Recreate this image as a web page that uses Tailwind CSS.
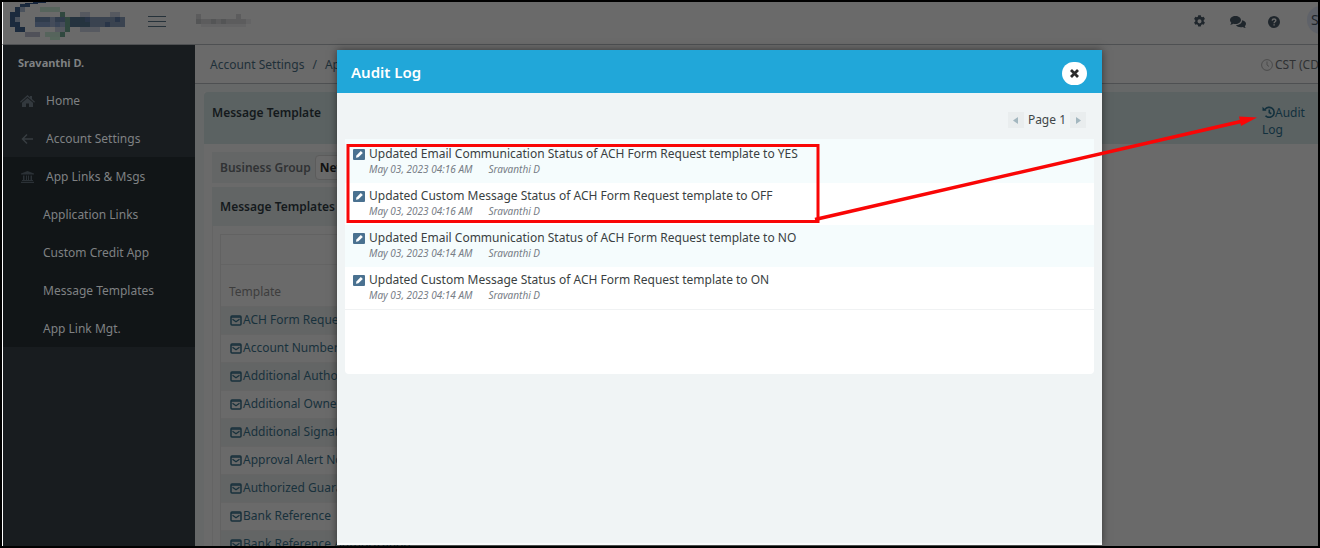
<!DOCTYPE html>
<html lang="en">
<head>
  <meta charset="UTF-8">
  <meta name="viewport" content="width=device-width, initial-scale=1.0">
  <title>Audit Log | Message Templates</title>
  <script src="https://cdn.jsdelivr.net/npm/@tailwindcss/browser@4"></script>
</head>
<body class="font-['Noto_Sans',sans-serif] text-[12px] leading-5">
  <!-- Shared icons -->
  <svg class="hidden">
    <symbol id="mail" viewBox="0 0 12 11">
      <rect x="1" y="1" width="10" height="9" rx="1" fill="none" stroke="currentColor" stroke-width="1.5"/>
      <path d="M1 2.2h10M2.5 4.2 6 6.8l3.500-2.600" fill="none" stroke="currentColor" stroke-width="1.300"/>
    </symbol>
    <symbol id="pencil" viewBox="0 0 12 11">
      <rect width="12" height="11" rx="1" fill="#4a7190"/>
      <path d="M3 8.800l.4-2.400L7.800 2l2 1.900L5.400 8.300z" fill="#fff"/>
    </symbol>
  </svg>

  <div class="relative h-screen overflow-hidden border-2 border-black bg-[#6a6a6a] flex flex-col">
    <header class="h-[43px] shrink-0 flex items-center border-b border-l border-b-[#4e5052] border-l-white pl-[7px] pb-[3px]">
      <svg class="w-[118px] h-10 shrink-0" viewBox="0 0 118 40" role="img" aria-label="Company logo" shape-rendering="crispEdges">
        <path d="M15 1h8V0h13v1h-8v1h-8v1h-5z" fill="#14233a"/>
        <g fill="#1b2a3d">
          <path d="M10 2h10v3H10zM5 5h5v5H5zM0 10h10v5H0zM0 15h5v5H0zM0 20h10v5H0zM5 25h10v5H5z"/>
        </g>
        <path d="M10 5h5v5h-5zM5 15h5v5H5z" fill="#4b525c"/>
        <path d="M15 30h15v5H15z" fill="#505159"/>
        <path d="M25 15h35v5H25z" fill="#303c4c"/>
        <path d="M25 20h35v5H25z" fill="#3a4557"/>
        <path d="M40 15h5v10h-5zM50 20h5v5h-5z" fill="#444c5a"/>
        <path d="M60 15h20v10H60z" fill="#25333f"/>
        <path d="M80 15h35v10H80z" fill="#3a4350"/>
        <path d="M75 15h5v5h-5zM95 20h5v5h-5zM105 15h5v5h-5z" fill="#293548"/>
        <path d="M70 10h10v5H70zM100 10h10v5h-10zM45 25h15v5H45zM70 25h20v5H70z" fill="#565960"/>
        <path d="M30 5h20v5H30zM35 30h20v5H35z" fill="#56645c"/>
        <path d="M50 10h5v5h-5zM55 15h5v15h-5zM50 30h5v5h-5z" fill="#30483f"/>
        <path d="M40 35h10v3H40z" fill="#56675c"/>
      </svg>
      <button class="ml-5 flex flex-col gap-[4px]" aria-label="Toggle menu">
        <span class="block h-px w-[18px] bg-[#26323a]"></span>
        <span class="block h-px w-[18px] bg-[#26323a]"></span>
        <span class="block h-px w-[18px] bg-[#26323a]"></span>
      </button>
      <svg class="ml-[30px] w-[55px] h-[15px]" viewBox="0 0 55 15" shape-rendering="crispEdges" aria-hidden="true">
        <path d="M0 0h5v5H0zM5 5h10v5H5zM20 5h5v5h-5zM30 5h20v5H30zM40 0h5v5h-5z" fill="#5c5c5d"/>
        <path d="M0 5h5v5H0zM15 5h5v5h-5zM25 5h5v5h-5z" fill="#545556"/>
        <path d="M50 5h5v5h-5zM5 10h45v3H5z" fill="#646465"/>
      </svg>
      <div class="ml-auto flex items-center text-[#1f262c]">
        <button aria-label="Settings">
          <svg class="size-[13px]" viewBox="0 0 512 512" fill="currentColor"><path fill-rule="evenodd" d="M205 5h102l13 62 39 23 60-20 51 88-47 42v56l47 42-51 88-60-20-39 23-13 62H205l-13-62-39-23-60 20-51-88 47-42v-56l-47-42 51-88 60 20 39-23zm51 165a80 80 0 1 0 0 160 80 80 0 1 0 0-160z"/></svg>
        </button>
        <button class="ml-[24px]" aria-label="Messages">
          <svg class="w-4 h-3" viewBox="0 0 16 12" fill="currentColor"><path d="M5.500 0C8.600 0 11 1.800 11 4S8.600 8 5.500 8c-.8 0-1.500-.1-2.200-.3C2.500 8.300 1.400 8.700.2 8.700c.6-.6 1-1.400 1.100-2C.5 6 0 5 0 4c0-2.200 2.400-4 5.500-4z"/><path d="M12 4.200c2.300.3 4 1.800 4 3.600 0 .9-.4 1.800-1.200 2.500.1.600.5 1.200 1 1.700-1.100 0-2.200-.4-3-1-3 .7-5.800-.2-6.800-2 3.500 0 6.200-2 6-4.800z"/></svg>
        </button>
        <button class="ml-[22px]" aria-label="Help">
          <svg class="size-3" viewBox="0 0 12 12"><circle cx="6" cy="6" r="6" fill="currentColor"/><path d="M4.200 4.600C4.300 2.300 8 2.500 7.800 4.600 7.700 5.800 6.100 5.800 6.100 7.200M6.100 8.200v1.300" fill="none" stroke="#6a6a6a" stroke-width="1.400"/></svg>
        </button>
        <a href="#" class="ml-[27px] -mr-[17px] -mt-1 size-7 rounded-full bg-[#5f6269] pl-1 leading-7 text-[14px]">S</a>
      </div>
    </header>

    <div class="flex grow min-h-0">
      <aside class="w-[193px] shrink-0 border-l border-white bg-[#181c1f] text-[#7f8183]">
        <p class="h-9 pl-[15px] leading-9 text-[11px] font-bold">Sravanthi D.</p>
        <nav>
          <a href="#" class="flex h-[38px] items-center pt-px pl-[17px]">
            <svg class="w-[15px] h-3 mr-[11px] text-[#33393e]" viewBox="0 0 15 12" fill="currentColor"><path d="M7.500 0 10 2.200V1h2v3L15 6.800l-.8.9L7.500 1.800.8 7.700 0 6.800z"/><path d="M7.500 3 13 7.800V12H9V8.500H6V12H2V7.800z"/></svg>
            Home
          </a>
          <a href="#" class="flex h-[38px] items-center pt-px pl-[17px]">
            <svg class="w-[15px] h-3 mr-[11px] text-[#373d41]" viewBox="0 0 15 12" fill="none" stroke="currentColor" stroke-width="1.500"><path d="M13 6H3M7 1.500 2.500 6 7 10.500"/></svg>
            Account Settings
          </a>
          <div class="bg-[#111517]">
            <a href="#" class="flex h-[38px] items-center pt-px pl-[17px]">
              <svg class="w-[15px] h-3 mr-[11px] text-[#2b3136]" viewBox="0 0 15 12" fill="currentColor"><path d="M7.500 0 14 2.500v1H1v-1zM3 4.500h1.500V9H3zM6 4.500h1V9H6zM8 4.500h1V9H8zM10.500 4.500H12V9h-1.500zM2 9h11v1H2zM1 10.800h13V12H1z"/></svg>
              App Links &amp; Msgs
            </a>
            <a href="#" class="flex h-[38px] items-center pt-px pl-10">Application Links</a>
            <a href="#" class="flex h-[38px] items-center pt-px pl-10">Custom Credit App</a>
            <a href="#" class="flex h-[38px] items-center pt-px pl-10">Message Templates</a>
            <a href="#" class="flex h-[38px] items-center pt-px pl-10">App Link Mgt.</a>
          </div>
        </nav>
      </aside>

      <main class="grow min-w-0 overflow-hidden">
        <div class="flex h-[39px] items-center border-b border-[#4e5052] pt-px pl-[15px] whitespace-nowrap text-[#1f3039]">
          <a href="#">Account Settings</a>
          <span class="mx-2">/</span>
          <a href="#">App</a>
          <span class="ml-auto flex w-[57px] items-center text-[#2f3133]">
            <svg class="size-3 mr-0.5 shrink-0" viewBox="0 0 12 12" fill="none" stroke="#4c4c4c"><circle cx="6" cy="6" r="5.400"/><path d="M6 2.500V6l2 1.500"/></svg>
            CST (CDT)
          </span>
        </div>
        <div class="pt-2 pl-[9px] bg-[#666868]">
          <section class="bg-[#6a6a6a]">
            <div class="flex h-[52px] rounded-tl-sm bg-[#5b6262] pl-2">
              <h1 class="pt-[11px] font-semibold text-[#14191c]">Message Template</h1>
              <a href="#" class="ml-auto mr-1 w-[52px] pt-3 leading-[17px] text-[#12303d]">
                <svg class="inline w-[13px] h-3 -mt-1" viewBox="0 0 13 12" fill="none" stroke="currentColor" stroke-width="1.600"><path d="M3 3.500A5 5 0 1 1 3.500 9.800M7.300 3.500v3l2 1.200"/><path d="M.5.800v4h4z" fill="currentColor" stroke="none"/></svg>Audit Log
              </a>
            </div>
            <div class="w-3/4 pt-2 pl-2">
              <div class="flex h-[31px] items-center bg-[#646666] pl-2">
                <label for="business-group" class="font-semibold text-[#303234]">Business Group</label>
                <select id="business-group" class="ml-1 h-[25px] w-40 appearance-none rounded-sm border border-[#5c5c5c] bg-[#6a6a6a] px-1 text-[12px] font-bold text-[#111]"><option>New Business</option></select>
              </div>
              <h2 class="mt-1 flex h-[39px] items-center bg-[#626565] pt-px pl-2 font-semibold text-[#14191c]">Message Templates</h2>
              <div class="border-l border-[#646464] pt-2 pl-[7px]">
                <div class="border border-[#626262]">
                  <div class="h-[30px] border-b border-[#646464]"></div>
                  <table class="w-full text-left text-[#18313c]">
                    <thead><tr class="h-[41px]"><th class="pl-2 pt-[14px] font-normal leading-5 text-[#3d3d3d]">Template</th></tr></thead>
                    <tbody id="templates"></tbody>
                  </table>
                </div>
              </div>
            </div>
          </section>
        </div>
      </main>
    </div>

    <!-- Audit log dialog -->
    <section role="dialog" aria-labelledby="audit-title" class="absolute top-[48px] bottom-px left-[335px] right-[216px] flex flex-col bg-[#f0f4f5] border-b-2 border-[#f9fbfb] shadow-[0_0_8px_rgba(0,0,0,0.5)]">
      <header class="flex h-[43px] shrink-0 items-center justify-between bg-[#21a7d9] pl-3.5 pr-[15px]">
        <h2 id="audit-title" class="pt-px text-[15px] font-semibold text-white">Audit Log</h2>
        <button class="mt-1 grid h-[23px] w-[25px] place-items-center rounded-full bg-white" aria-label="Close">
          <svg class="size-[9px]" viewBox="0 0 9 9" stroke="#2b2b2b" stroke-width="2.800"><path d="m1 1 7 7M8 1 1 8"/></svg>
        </button>
      </header>
      <div class="flex h-[46px] shrink-0 items-center justify-end gap-1 pt-2 pr-4 text-[#3f4648]">
        <button class="grid size-4 place-items-center bg-[#e9edee]" aria-label="Previous page"><svg class="w-[5px] h-[7px]" viewBox="0 0 5 7"><path d="M5 0v7L0 3.500z" fill="#a3b7bf"/></svg></button>
        <span>Page 1</span>
        <button class="grid size-4 place-items-center bg-[#e9edee]" aria-label="Next page"><svg class="w-[5px] h-[7px]" viewBox="0 0 5 7"><path d="M0 0v7l5-3.500z" fill="#a3b7bf"/></svg></button>
      </div>
      <div class="mx-2 h-[235px] rounded-b bg-white">
        <ul id="audit-entries" class="border-b border-[#f0f2f3]"></ul>
      </div>
    </section>

    <!-- Callout from the entries to the Audit Log link -->
    <svg class="pointer-events-none absolute inset-0" width="1316" height="544" viewBox="2 2 1316 544">
      <rect x="348" y="145.500" width="470" height="76" fill="none" stroke="#f90606" stroke-width="3"/>
      <path d="M815 219.500 1243 121" stroke="#f90606" stroke-width="3.500"/>
      <path d="m1257 117.500-18-1 2 9.500z" fill="#f90606"/>
    </svg>
  </div>

  <script>
    const templates = ['ACH Form Request', 'Account Number Change', 'Additional Authorized Signer', 'Additional Owner', 'Additional Signature', 'Approval Alert Notice', 'Authorized Guarantor', 'Bank Reference', 'Bank Reference Authorization'];
    document.getElementById('templates').innerHTML = templates.map((name) => `
      <tr class="h-[28px] border-t border-[#656565] odd:bg-[#636565]">
        <td class="pl-[9px]"><a href="#" class="flex items-center whitespace-nowrap"><svg class="w-3 h-[11px] mr-px"><use href="#mail"/></svg>${name}</a></td>
      </tr>`).join('');

    const entries = [
      ['Updated Email Communication Status of ACH Form Request template to YES', 'May 03, 2023 04:16 AM'],
      ['Updated Custom Message Status of ACH Form Request template to OFF', 'May 03, 2023 04:16 AM'],
      ['Updated Email Communication Status of ACH Form Request template to NO', 'May 03, 2023 04:14 AM'],
      ['Updated Custom Message Status of ACH Form Request template to ON', 'May 03, 2023 04:14 AM'],
    ];
    document.getElementById('audit-entries').innerHTML = entries.map(([text, date]) => `
      <li class="h-[42px] pl-2 pt-1 first:h-[44px] first:pt-1.5 odd:bg-[#f5fcfd]">
        <div class="flex items-center leading-[18px] text-[#3a3f42]"><svg class="w-3 h-[11px] mr-1"><use href="#pencil"/></svg>${text}</div>
        <div class="flex gap-4 pl-4 text-[10px] leading-[12px] italic text-[#777d86]"><span>${date}</span><span>Sravanthi D</span></div>
      </li>`).join('');
  </script>
</body>
</html>
